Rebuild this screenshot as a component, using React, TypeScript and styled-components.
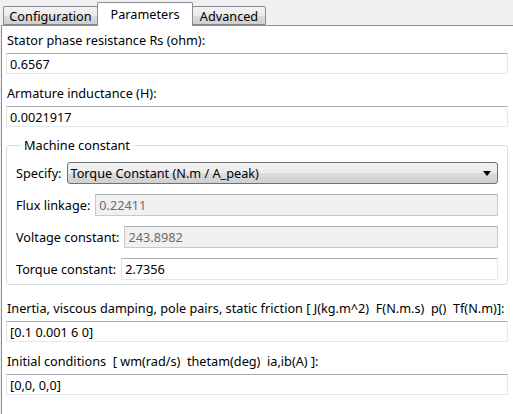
import React from 'react';
import styled, { createGlobalStyle } from 'styled-components';

const GlobalStyle = createGlobalStyle`
  html, body {
    margin: 0;
    padding: 0;
    background: #f0f0f0;
  }
  body {
    font-family: "Noto Sans", "Open Sans", Arial, sans-serif;
    font-size: 12.7px;
    color: #000;
  }
`;

const tabs = [
  { label: 'Configuration', width: 95 },
  { label: 'Parameters', width: 96, active: true },
  { label: 'Advanced', width: 74 },
];

const App: React.FC = () => {
  return (
    <>
      <GlobalStyle />
      <Window>
        <TabBar>
          {tabs.map((t) => (
            <Tab key={t.label} $active={!!t.active} $width={t.width}>
              {t.label}
            </Tab>
          ))}
        </TabBar>

        <Panel>
          <Field>
            <FieldLabel>Stator phase resistance Rs (ohm):</FieldLabel>
            <TextBox defaultValue="0.6567" />
          </Field>
          <Field>
            <FieldLabel>Armature inductance (H):</FieldLabel>
            <TextBox defaultValue="0.0021917" />
          </Field>

          <GroupBox>
            <Legend>Machine constant</Legend>
            <Row>
              <RowLabel>Specify:</RowLabel>
              <Dropdown>
                <span>Torque Constant (N.m / A_peak)</span>
                <svg width="8" height="5" viewBox="0 0 8 5">
                  <path d="M0 0 L8 0 L4 5 Z" fill="#000" />
                </svg>
              </Dropdown>
            </Row>
            <Row>
              <RowLabel>Flux linkage:</RowLabel>
              <RowBox $disabled value="0.22411" readOnly />
            </Row>
            <Row>
              <RowLabel>Voltage constant:</RowLabel>
              <RowBox $disabled value="243.8982" readOnly />
            </Row>
            <Row>
              <RowLabel>Torque constant:</RowLabel>
              <RowBox defaultValue="2.7356" />
            </Row>
          </GroupBox>

          <Field $spaced>
            <FieldLabel>
              Inertia, viscous damping, pole pairs, static friction [ J(kg.m^2)&nbsp; F(N.m.s)&nbsp; p()&nbsp; Tf(N.m)]:
            </FieldLabel>
            <TextBox defaultValue="[0.1 0.001 6 0]" />
          </Field>
          <Field>
            <FieldLabel>
              Initial conditions&nbsp; [ wm(rad/s)&nbsp; thetam(deg)&nbsp; ia,ib(A) ]:
            </FieldLabel>
            <TextBox defaultValue="[0,0, 0,0]" />
          </Field>
        </Panel>
      </Window>
    </>
  );
};

const Window = styled.div`
  width: 513px;
  height: 414px;
  overflow: hidden;
  display: flex;
  flex-direction: column;
  background: #f0f0f0;
`;

const TabBar = styled.div`
  height: 25px;
  display: flex;
  align-items: flex-end;
  padding-left: 3px;
  flex-shrink: 0;
`;

const Tab = styled.div<{ $active: boolean; $width: number }>`
  position: relative;
  z-index: ${(p) => (p.$active ? 2 : 1)};
  box-sizing: border-box;
  width: ${(p) => p.$width}px;
  height: ${(p) => (p.$active ? 24 : 19)}px;
  margin-bottom: ${(p) => (p.$active ? -1 : 0)}px;
  margin-left: ${(p) => (p.$active ? -1 : 0)}px;
  margin-right: ${(p) => (p.$active ? -1 : 0)}px;
  display: flex;
  align-items: center;
  justify-content: center;
  padding-bottom: ${(p) => (p.$active ? 2 : 0)}px;
  border: 1px solid #898c95;
  border-bottom: ${(p) => (p.$active ? 'none' : '1px solid #898c95')};
  border-radius: 2px 2px 0 0;
  background: ${(p) =>
    p.$active ? '#ffffff' : 'linear-gradient(#f2f2f2, #ebebeb 50%, #dddddd 51%, #cfcfcf)'};
  font-size: 12.7px;
  white-space: nowrap;
  color: #000;
`;

const Panel = styled.div`
  flex: 1;
  margin-left: 1px;
  border-top: 1px solid #898c95;
  border-left: 1px solid #898c95;
  background: #ffffff;
  padding: 0 5px 0 4px;
  display: flex;
  flex-direction: column;
`;

const Field = styled.div<{ $spaced?: boolean }>`
  display: flex;
  flex-direction: column;
  margin-top: ${(p) => (p.$spaced ? 9 : 5)}px;
  &:first-child {
    margin-top: 0;
  }
`;

const FieldLabel = styled.div`
  padding: 4px 0 3px 1px;
  line-height: 20px;
  white-space: nowrap;
`;

const TextBox = styled.input`
  box-sizing: border-box;
  width: 100%;
  height: 21px;
  margin: 0;
  padding: 0 3px;
  border: 1px solid;
  border-color: #abadb3 #e3e9ef #e3e9ef #e2e3ea;
  background: #ffffff;
  font-family: inherit;
  font-size: 12.7px;
  color: #000;
  outline: none;
`;

const GroupBox = styled.fieldset`
  margin: 8px 0 0 0;
  padding: 0 9px 4px 9px;
  border: 1px solid #d5dfe5;
  border-radius: 3px;
  display: flex;
  flex-direction: column;
  gap: 10px;
  min-width: 0;
`;

const Legend = styled.legend`
  padding: 0 3px;
  margin-left: 5px;
  line-height: 20px;
  margin-bottom: 7px;
`;

const Row = styled.div`
  display: flex;
  align-items: center;
  gap: 5px;
  height: 22px;
`;

const RowLabel = styled.span`
  white-space: nowrap;
`;

const RowBox = styled(TextBox)<{ $disabled?: boolean }>`
  flex: 1;
  height: 22px;
  background: ${(p) => (p.$disabled ? '#f0f0f0' : '#ffffff')};
  color: ${(p) => (p.$disabled ? '#6d6d6d' : '#000')};
  border-color: ${(p) =>
    p.$disabled ? '#adb2b5 #c9c9c9 #c9c9c9 #c9c9c9' : '#abadb3 #e3e9ef #e3e9ef #e2e3ea'};
`;

const Dropdown = styled.div`
  flex: 1;
  box-sizing: border-box;
  height: 22px;
  display: flex;
  align-items: center;
  justify-content: space-between;
  padding: 0 6px 0 3px;
  border: 1px solid #707070;
  border-radius: 3px;
  background: linear-gradient(#f2f2f2, #ebebeb 50%, #dddddd 51%, #cfcfcf);
  white-space: nowrap;
`;

export default App;
